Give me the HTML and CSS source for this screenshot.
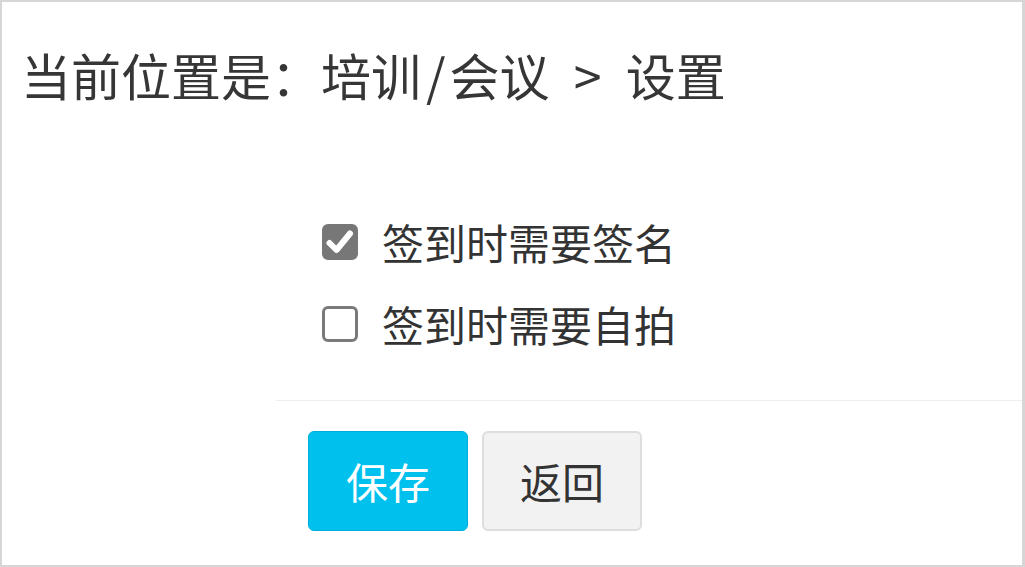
FILE: index.html
```html
<!DOCTYPE html>
<html lang="zh-CN">
<head>
<meta charset="utf-8">
<title>设置</title>
<link rel="stylesheet" href="styles.css">
</head>
<body>
<div class="frame">
  <div class="crumb">当前位置是：培训<span class="slash">/</span>会议 &gt; 设置</div>
  <div class="form">
    <div class="options">
      <label class="opt">
        <span class="box checked">
          <svg viewBox="0 0 36 36" width="36" height="36"><path d="M7.5 19 L14.5 26 L28 9.5" fill="none" stroke="#fff" stroke-width="6" stroke-linecap="round" stroke-linejoin="round"/></svg>
        </span>
        <span class="txt">签到时需要签名</span>
      </label>
      <label class="opt">
        <span class="box"></span>
        <span class="txt">签到时需要自拍</span>
      </label>
    </div>
    <div class="actions">
      <button class="btn primary">保存</button>
      <button class="btn plain">返回</button>
    </div>
  </div>
</div>
</body>
</html>
```

FILE: styles.css
```css
* { box-sizing: border-box; }
html, body { margin: 0; padding: 0; background: #fff; }
body {
  font-family: "Noto Sans CJK SC", "Noto Sans", sans-serif;
  color: #3a3a3a;
}
.frame {
  width: 1025px;
  height: 567px;
  border: 2px solid #d6d6d6;
  border-right-width: 3px;
  background: #fff;
  overflow: hidden;
}
.crumb {
  font-size: 50px;
  line-height: 50px;
  margin-top: 47px;
  padding-left: 19px;
  white-space: pre;
  word-spacing: 13px;
  color: #363636;
}
.crumb .slash {
  padding: 0 4px 0 5px;
}
.form {
  margin-left: 274px;
}
.options {
  margin-top: 122px;
  padding-left: 46px;
  padding-bottom: 55px;
  border-bottom: 1px solid #efefef;
  display: flex;
  flex-direction: column;
  gap: 40px;
}
.opt {
  display: flex;
  align-items: center;
  gap: 24px;
  height: 42px;
}
.box {
  width: 36px;
  height: 36px;
  border: 3px solid #7a7a7a;
  border-radius: 6px;
  background: #fff;
  display: flex;
  align-items: center;
  justify-content: center;
}
.box.checked {
  background: #777;
  border-color: #777;
}
.box svg { flex: none; }
.txt {
  font-size: 42px;
  line-height: 42px;
  color: #333;
}
.actions {
  padding-top: 30px;
  padding-left: 32px;
  display: flex;
  gap: 14px;
}
.btn {
  width: 160px;
  height: 100px;
  border-radius: 6px;
  font-family: inherit;
  font-size: 42px;
  line-height: 42px;
  padding: 0;
  cursor: pointer;
}
.btn.primary {
  background: #00c1ee;
  border: 1px solid #00aedb;
  color: #fff;
}
.btn.plain {
  background: #f2f2f2;
  border: 2px solid #dedede;
  color: #333;
}
```
